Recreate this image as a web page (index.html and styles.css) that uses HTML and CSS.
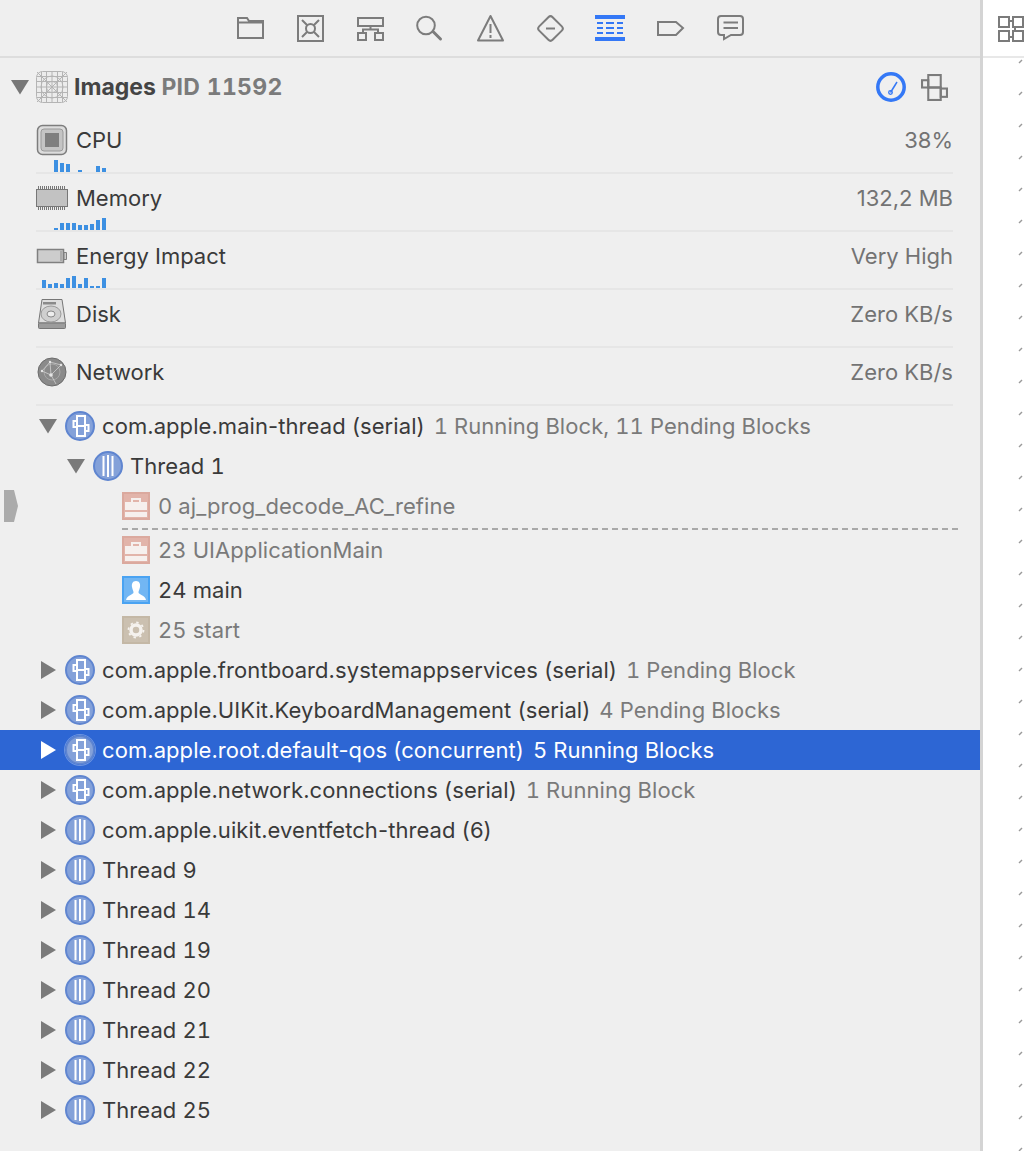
FILE: index.html
```html
<!DOCTYPE html>
<html lang="en">
<head>
<meta charset="utf-8">
<title>Debug navigator</title>
<link rel="stylesheet" href="styles.css">
</head>
<body>
<svg class="defs" width="0" height="0" aria-hidden="true">
  <symbol id="tri-down" viewBox="0 0 18 16"><path d="M0 1H18L9 15.500Z" fill="currentColor"/></symbol>
  <symbol id="tri-right" viewBox="0 0 16 18"><path d="M1 0L16 9L1 18Z" fill="currentColor"/></symbol>
  <symbol id="queue" viewBox="0 0 30 30">
    <circle cx="15" cy="15" r="14" fill="#84a1d9" stroke="#5f85d0" stroke-width="2"/>
    <g fill="none" stroke="#fff" stroke-width="2">
      <rect x="12" y="5" width="8" height="10"/><rect x="12" y="15" width="8" height="10"/>
      <rect x="8.500" y="10" width="3.500" height="6"/><rect x="20" y="14" width="3.500" height="6"/>
    </g>
  </symbol>
  <symbol id="thread" viewBox="0 0 30 30">
    <circle cx="15" cy="15" r="14" fill="#84a1d9" stroke="#5f85d0" stroke-width="2"/>
    <path d="M10.500 5V25M15 4V26M19.500 5V25" stroke="#fff" stroke-width="2" fill="none"/>
  </symbol>
  <symbol id="case" viewBox="0 0 28 28">
    <rect width="28" height="28" fill="#dba99e"/><rect x="2" y="2" width="24" height="24" fill="#e2b4aa"/>
    <path d="M3 10H25V18H3ZM3 20H25V25H3Z" fill="#f6f0ee"/><path d="M10 10V7H18V10" fill="none" stroke="#f6f0ee" stroke-width="2"/>
  </symbol>
</svg>
<div class="app">
  <main class="nav">
    <div class="toolbar">
      <svg class="tool" viewBox="0 0 30 30"><path d="M3 25V5H12L14 8H28V25ZM3 9.500H28"/></svg>
      <svg class="tool" viewBox="0 0 30 30"><rect x="3" y="3" width="25" height="25"/><circle cx="15.500" cy="15.500" r="4.500"/><path d="M7 7L12 12M24 7L19 12M7 24L12 19M24 24L19 19"/></svg>
      <svg class="tool" viewBox="0 0 30 30"><rect x="3" y="5" width="25" height="8"/><path d="M15.500 13V16.500M8 20V16.500H23V20"/><rect x="3" y="20" width="8" height="7"/><rect x="20" y="20" width="8" height="7"/></svg>
      <svg class="tool" viewBox="0 0 30 30"><circle cx="11" cy="12.500" r="8.800"/><path d="M18 18.500L25.500 26" stroke-width="3" stroke-linecap="round"/></svg>
      <svg class="tool" viewBox="0 0 30 30"><path d="M15.500 3L28 27.500H3Z" stroke-linejoin="round"/><path d="M15.500 11V20M15.500 22V25"/></svg>
      <svg class="tool" viewBox="0 0 30 30"><rect x="6" y="6" width="19" height="19" rx="3" transform="rotate(45 15.500 15.500)"/><path d="M11 15.500H20"/></svg>
      <svg class="tool tool-on" viewBox="0 0 30 30"><path d="M0 2H30V6H0ZM0 24H30V28H0Z" fill="#3478f6" stroke="none"/><path d="M2 10H8M11 10H19M22 10H28M2 15H8M11 15H19M22 15H28M2 20H8M11 20H19M22 20H28" stroke="#3478f6"/></svg>
      <svg class="tool" viewBox="0 0 30 30"><path d="M3 9H21L28 15L21 22H3Z"/></svg>
      <svg class="tool" viewBox="0 0 30 30"><path d="M6 3H25Q28 3 28 6V19Q28 22 25 22H16L9 26V22H6Q3 22 3 19V6Q3 3 6 3ZM8.500 9.500H23M8.500 15H23"/></svg>
    </div>

    <div class="proc">
      <svg class="tri-head"><use href="#tri-down"/></svg>
      <svg class="app-icon" viewBox="0 0 32 32">
        <rect x=".5" y=".5" width="31" height="31" rx="6" fill="#ececec" stroke="#b4b4b4"/>
        <g fill="none" stroke="#b4b4b4" stroke-width="1"><circle cx="16" cy="16" r="11"/><circle cx="16" cy="16" r="5.500"/><path d="M5.500 1V31M10.500 1V31M16 1V31M21.500 1V31M26.500 1V31M1 5.500H31M1 10.500H31M1 16H31M1 21.500H31M1 26.500H31M1 1L31 31M31 1L1 31"/></g>
      </svg>
      <h1 class="proc-name">Images <span class="pid">PID 11592</span></h1>
      <div class="proc-tools">
        <svg class="gauge" viewBox="0 0 30 30"><circle cx="15" cy="15" r="13.200" fill="none" stroke="#3478f6" stroke-width="3.500"/><path d="M14.500 20.500L21 10" stroke="#3478f6" stroke-width="1.500"/><circle cx="14.500" cy="20.500" r="1.800" fill="none" stroke="#3478f6" stroke-width="1.300"/></svg>
        <svg class="proc-queue" viewBox="0 0 26 26"><g fill="none" stroke="#7b7b7b" stroke-width="2"><rect x="7" y="1" width="12" height="12"/><rect x="7" y="13" width="12" height="12"/><rect x="1" y="6" width="6" height="7"/><rect x="19" y="14" width="6" height="8"/></g></svg>
      </div>
    </div>

    <section class="metrics">
      <div class="metric">
        <div class="metric-main">
          <svg class="m-icon" viewBox="0 0 32 32"><rect x="1.500" y="1.500" width="29" height="29" rx="5" fill="#dcdcdc" stroke="#7d7d7d" stroke-width="1.500"/><rect x="5" y="5" width="22" height="22" rx="3" fill="#c4c4c4" stroke="#9a9a9a"/><rect x="9" y="9" width="14" height="14" fill="#7f7f7f"/></svg>
          <span class="m-label">CPU</span><span class="m-value">38%</span>
        </div>
        <div class="spark">
          <i style="height:0"></i><i style="height:0"></i><i style="height:12px"></i><i style="height:9px"></i><i style="height:8px"></i><i style="height:0"></i><i style="height:2px"></i><i style="height:0"></i><i style="height:0"></i><i style="height:6px"></i><i style="height:4px"></i>
        </div>
      </div>
      <div class="metric">
        <div class="metric-main">
          <svg class="m-icon" viewBox="0 0 32 32"><path d="M2.500 4V28M4.500 4V28M6.500 4V28M8.500 4V28M10.500 4V28M12.500 4V28M14.500 4V28M16.500 4V28M18.500 4V28M20.500 4V28M22.500 4V28M24.500 4V28M26.500 4V28M28.500 4V28" stroke="#777" stroke-width="1"/><rect x=".5" y="7.500" width="31" height="17" fill="#c2c2c2" stroke="#777"/></svg>
          <span class="m-label">Memory</span><span class="m-value">132,2 MB</span>
        </div>
        <div class="spark">
          <i style="height:0"></i><i style="height:0"></i><i style="height:2px"></i><i style="height:7px"></i><i style="height:7px"></i><i style="height:7px"></i><i style="height:5px"></i><i style="height:5px"></i><i style="height:6px"></i><i style="height:10px"></i><i style="height:12px"></i>
        </div>
      </div>
      <div class="metric">
        <div class="metric-main">
          <svg class="m-icon" viewBox="0 0 32 32"><rect x="1.500" y="9.500" width="26" height="13" fill="#cdcdcd" stroke="#808080" stroke-width="1.500"/><path d="M28 12.500H30.500V19.500H28Z" fill="#cdcdcd" stroke="#808080"/><rect x="24" y="11" width="2.500" height="10" fill="#ababab"/></svg>
          <span class="m-label">Energy Impact</span><span class="m-value">Very High</span>
        </div>
        <div class="spark">
          <i style="height:8px"></i><i style="height:4px"></i><i style="height:5px"></i><i style="height:4px"></i><i style="height:10px"></i><i style="height:12px"></i><i style="height:4px"></i><i style="height:10px"></i><i style="height:2px"></i><i style="height:2px"></i><i style="height:10px"></i>
        </div>
      </div>
      <div class="metric">
        <div class="metric-main">
          <svg class="m-icon" viewBox="0 0 32 32"><path d="M6 1.500H26L29.500 25H2.500Z" fill="#dedede" stroke="#777"/><rect x="2.500" y="25" width="27" height="5.500" rx="1" fill="#9c9c9c" stroke="#777"/><rect x="7" y="4" width="13" height="2.500" fill="#8a8a8a"/><ellipse cx="15" cy="16" rx="10" ry="8" fill="#cfcfcf" stroke="#9a9a9a"/><ellipse cx="15" cy="16" rx="4" ry="3" fill="#eee" stroke="#888"/></svg>
          <span class="m-label">Disk</span><span class="m-value">Zero KB/s</span>
        </div>
        <div class="spark"></div>
      </div>
      <div class="metric">
        <div class="metric-main">
          <svg class="m-icon" viewBox="0 0 32 32"><circle cx="16" cy="16" r="14" fill="#8a8a8a" stroke="#6c6c6c"/><circle cx="16" cy="16" r="8" fill="none" stroke="#a8a8a8" stroke-width="1"/><g stroke="#cfcfcf" stroke-width=".8" fill="none"><path d="M6 15L15 19L25 9M15 19L20 28M15 19L14 6L25 9M6 15L14 6"/></g><circle cx="15" cy="19" r="1.800" fill="#e6e6e6"/><circle cx="25" cy="9" r="1.200" fill="#e6e6e6"/><circle cx="14" cy="6" r="1.200" fill="#e6e6e6"/><circle cx="6" cy="15" r="1.200" fill="#e6e6e6"/></svg>
          <span class="m-label">Network</span><span class="m-value">Zero KB/s</span>
        </div>
        <div class="spark"></div>
      </div>
    </section>

    <section class="tree">
      <div class="row"><svg class="tw"><use href="#tri-down"/></svg><svg class="ic"><use href="#queue"/></svg><span class="t">com.apple.main-thread (serial)</span><span class="d">1 Running Block, 11 Pending Blocks</span></div>
      <div class="row l1"><svg class="tw"><use href="#tri-down"/></svg><svg class="ic"><use href="#thread"/></svg><span class="t n">Thread 1</span></div>
      <div class="row l2 current">
        <svg class="pc" viewBox="0 0 14 32"><path d="M0 0H10L14 16L10 32H0Z" fill="#ababab"/></svg>
        <svg class="fr"><use href="#case"/></svg><span class="g">0 aj_prog_decode_AC_refine</span></div>
      <div class="dash"></div>
      <div class="row l2"><svg class="fr"><use href="#case"/></svg><span class="g">23 UIApplicationMain</span></div>
      <div class="row l2"><svg class="fr" viewBox="0 0 28 28"><rect width="28" height="28" fill="#4aa3f2"/><rect x="2" y="2" width="24" height="24" fill="#72b6f3"/><path d="M14 5C10.500 5 9.500 8 10 11C10.500 13.500 11.500 15 11.500 16.500C11.500 18.500 5 19 4 24H24C23 19 16.500 18.500 16.500 16.500C16.500 15 17.500 13.500 18 11C18.500 8 17.500 5 14 5Z" fill="#fff"/></svg><span class="t n">24 main</span></div>
      <div class="row l2"><svg class="fr" viewBox="0 0 28 28"><rect width="28" height="28" fill="#c4b8a6"/><rect x="2" y="2" width="24" height="24" fill="#cbc0b0"/><circle cx="14" cy="14" r="5" fill="none" stroke="#f5f2ee" stroke-width="3.500"/><circle cx="14" cy="14" r="7.500" fill="none" stroke="#f5f2ee" stroke-width="1.800" stroke-dasharray="2.400 3.490"/></svg><span class="g">25 start</span></div>
      <div class="row"><svg class="tw"><use href="#tri-right"/></svg><svg class="ic"><use href="#queue"/></svg><span class="t">com.apple.frontboard.systemappservices (serial)</span><span class="d">1 Pending Block</span></div>
      <div class="row"><svg class="tw"><use href="#tri-right"/></svg><svg class="ic"><use href="#queue"/></svg><span class="t">com.apple.UIKit.KeyboardManagement (serial)</span><span class="d">4 Pending Blocks</span></div>
      <div class="row sel"><svg class="tw"><use href="#tri-right"/></svg><svg class="ic"><use href="#queue"/></svg><span class="t">com.apple.root.default-qos (concurrent)</span><span class="d">5 Running Blocks</span></div>
      <div class="row"><svg class="tw"><use href="#tri-right"/></svg><svg class="ic"><use href="#queue"/></svg><span class="t">com.apple.network.connections (serial)</span><span class="d">1 Running Block</span></div>
      <div class="row"><svg class="tw"><use href="#tri-right"/></svg><svg class="ic"><use href="#thread"/></svg><span class="t">com.apple.uikit.eventfetch-thread (6)</span></div>
      <div class="row"><svg class="tw"><use href="#tri-right"/></svg><svg class="ic"><use href="#thread"/></svg><span class="t n">Thread 9</span></div>
      <div class="row"><svg class="tw"><use href="#tri-right"/></svg><svg class="ic"><use href="#thread"/></svg><span class="t n">Thread 14</span></div>
      <div class="row"><svg class="tw"><use href="#tri-right"/></svg><svg class="ic"><use href="#thread"/></svg><span class="t n">Thread 19</span></div>
      <div class="row"><svg class="tw"><use href="#tri-right"/></svg><svg class="ic"><use href="#thread"/></svg><span class="t n">Thread 20</span></div>
      <div class="row"><svg class="tw"><use href="#tri-right"/></svg><svg class="ic"><use href="#thread"/></svg><span class="t n">Thread 21</span></div>
      <div class="row"><svg class="tw"><use href="#tri-right"/></svg><svg class="ic"><use href="#thread"/></svg><span class="t n">Thread 22</span></div>
      <div class="row"><svg class="tw"><use href="#tri-right"/></svg><svg class="ic"><use href="#thread"/></svg><span class="t n">Thread 25</span></div>
    </section>
  </main>

  <aside class="side">
    <div class="side-top">
      <svg class="side-icon" viewBox="0 0 26 26"><g fill="none" stroke="#7b7b7b" stroke-width="2"><rect x="1" y="1" width="10" height="10"/><rect x="15" y="1" width="10" height="10"/><rect x="1" y="15" width="10" height="10"/><rect x="15" y="15" width="10" height="10"/><path d="M11 5H15M17 11V15M11 21H15"/></g></svg>
    </div>
    <svg class="ticks" width="42" height="1093">
      <defs><pattern id="tick" width="42" height="32" patternUnits="userSpaceOnUse"><path d="M36 5L39 2" stroke="#9a9a9a" stroke-width="1.500"/></pattern></defs>
      <rect width="42" height="1093" fill="url(#tick)"/>
    </svg>
  </aside>
</div>
</body>
</html>
```

FILE: styles.css
```css
* { box-sizing: border-box; }
html, body { margin: 0; padding: 0; }
body {
  width: 1024px;
  height: 1151px;
  overflow: hidden;
  background: #efefef;
  font-family: Inter, "Liberation Sans", sans-serif;
  font-size: 22px;
  font-weight: 420;
  color: #3a3a3a;
}
.defs { position: absolute; }
svg { display: block; flex: none; }

.app { display: flex; height: 1151px; }
.nav { width: 980px; flex: none; background: #efefef; }

.toolbar {
  display: flex;
  gap: 30px;
  height: 58px;
  padding: 13px 0 0 235px;
  border-bottom: 2px solid #dddddd;
}
.tool { width: 30px; height: 30px; fill: none; stroke: #7c7c7c; stroke-width: 2; }

.proc {
  display: flex;
  align-items: center;
  height: 58px;
  padding: 0 32px 0 11px;
}
.tri-head { width: 18px; height: 16px; color: #777; margin-right: 7px; }
.app-icon { width: 32px; height: 32px; margin-right: 6px; }
.proc-name { margin: 0; font-size: 23px; font-weight: 700; color: #444; flex: 1; }
.pid { color: #7b7b7b; letter-spacing: .3px; font-variant-numeric: tabular-nums; }
.proc-tools { display: flex; align-items: center; gap: 15px; }
.gauge { width: 30px; height: 30px; }
.proc-queue { width: 27px; height: 27px; }

.metrics { padding: 0 27px 0 36px; }
.metric { height: 58px; padding-top: 4px; border-bottom: 2px solid #e6e6e6; }
.metric-main { display: flex; align-items: center; height: 40px; }
.m-icon { width: 32px; height: 32px; margin-right: 8px; }
.m-label { flex: 1; }
.m-value { color: #737373; }
.spark { display: flex; align-items: flex-end; gap: 2px; height: 12px; padding-left: 6px; }
.spark i { display: block; width: 4px; background: #3d90e2; }

.row {
  position: relative;
  display: flex;
  align-items: center;
  height: 40px;
  padding-left: 39px;
  letter-spacing: .07px;
}
.tw { width: 18px; height: 18px; color: #7a7a7a; margin-right: 8px; }
.ic { width: 30px; height: 30px; margin-right: 7px; }
.t { white-space: pre; }
.n, .d, .g { font-variant-numeric: tabular-nums; }
.d { color: #7a7a7a; margin-left: 9px; }
.g { color: #7a7a7a; }
.l1 { padding-left: 67px; }
.l2 { padding-left: 122px; }
.fr { width: 28px; height: 28px; margin-right: 8px; }
.pc { position: absolute; left: 4px; top: 4px; width: 14px; height: 32px; }
.dash { height: 4px; margin: 0 22px 0 122px; border-top: 2px dashed #a9a9a9; transform: translateY(2px); }
.sel { background: #2d66d4; color: #fff; }
.sel .tw { color: #fff; }
.sel .d { color: #fff; }
.sel .ic { border-radius: 50%; box-shadow: 0 0 0 1px rgba(255, 255, 255, .3); }

.side { flex: 1; border-left: 3px solid #d4d4d4; background: #fff; }
.side-top { height: 58px; padding: 16px 0 0 15px; border-bottom: 2px solid #e8e8e8; overflow: hidden; }
.side-icon { width: 26px; height: 26px; }
```
